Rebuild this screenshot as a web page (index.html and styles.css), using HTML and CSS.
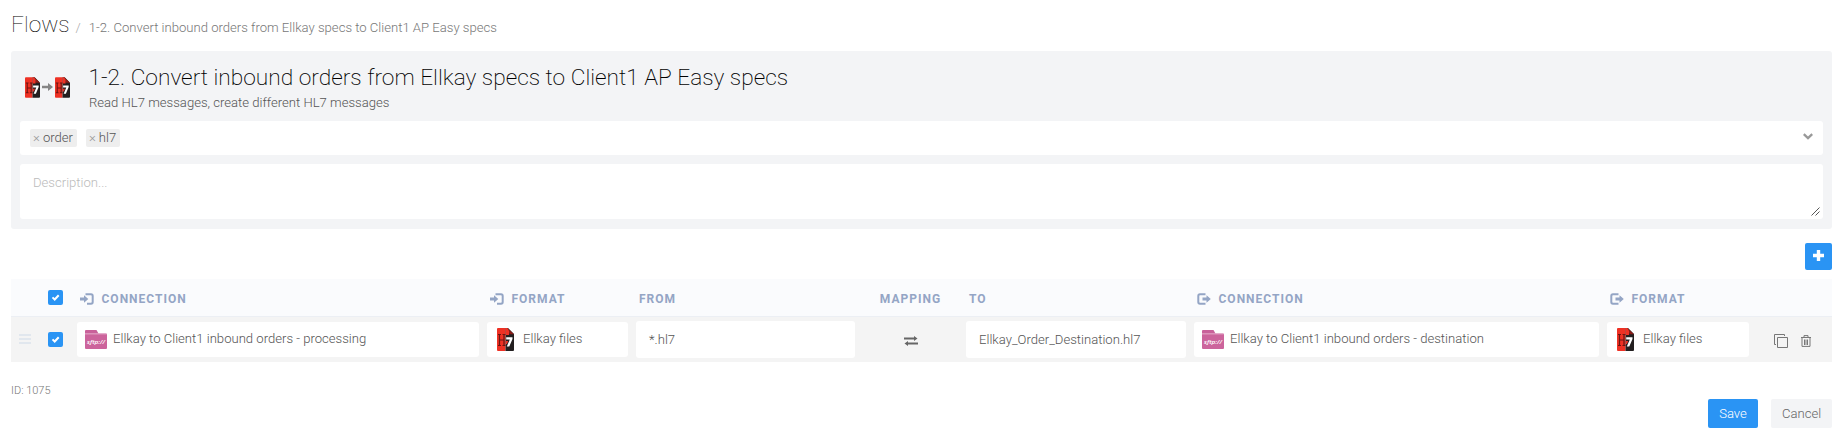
FILE: index.html
```html
<!DOCTYPE html>
<html lang="en">
<head>
<meta charset="utf-8">
<title>Flows</title>
<link rel="stylesheet" href="styles.css">
</head>
<body>
<svg class="defs" width="0" height="0" aria-hidden="true">
  <symbol id="hl7" viewBox="0 0 17 23">
    <path d="M1 0H8.500V23H1Q0 23 0 22V1Q0 0 1 0Z" fill="#ee3124"/>
    <path d="M8.500 0H11L17 6V22Q17 23 16 23H8.500Z" fill="#231f20"/>
    <path d="M10.500 0L17 6.200H12.500Z" fill="#8c1d18"/>
    <path d="M8.500 0H10.500L12 3V7H8.500Z" fill="#ee3124"/>
    <path d="M1 6.500H4M1 17.500H4M2.500 6.500V17.500M2.500 12H7M5.500 6.500H8.500M5.500 17.500H8.500M7 6.500V17.500" fill="none" stroke="#6b1411" stroke-width="1.200"/>
    <path d="M9.200 11.500V9.300H15.500V11L12.300 18.500H9.800L12.800 11.500Z" fill="#fff"/>
    <path d="M8.700 13H11.200L10 16H8.700Z" fill="#ee3124"/>
  </symbol>
  <symbol id="sftp" viewBox="0 0 22 19">
    <path d="M1 0H11.500L13.500 3.500H0V1Q0 0 1 0Z" fill="#c9619a"/>
    <path d="M0 3.500H21Q22 3.500 22 4.500V18Q22 19 21 19H1Q0 19 0 18Z" fill="#cc649c"/>
    <path d="M0 4H21.500" stroke="#e3a5c6" stroke-width=".8"/>
    <text x="2" y="13.800" font-family="Open Sans, sans-serif" font-weight="600" font-style="italic" font-size="6" textLength="18" lengthAdjust="spacingAndGlyphs" fill="#fff">sftp://</text>
  </symbol>
  <symbol id="in" viewBox="0 0 14 12">
    <path d="M5.500 1.200H11Q12.700 1.200 12.700 2.900V9.100Q12.700 10.800 11 10.800H7" fill="none" stroke="currentColor" stroke-width="2"/>
    <path d="M0 4.600H4V2.300L8.300 6L4 9.700V7.400H0Z" fill="currentColor"/>
  </symbol>
  <symbol id="out" viewBox="0 0 14 12">
    <path d="M8.500 1.200H3Q1.300 1.200 1.300 2.900V9.100Q1.300 10.800 3 10.800H8.500" fill="none" stroke="currentColor" stroke-width="2"/>
    <path d="M5.500 4.600H9.500V2.300L13.800 6L9.500 9.700V7.400H5.500Z" fill="currentColor"/>
  </symbol>
  <symbol id="check" viewBox="0 0 15 15">
    <path d="M4.500 7.400L6.700 9.500L10.700 5.200" fill="none" stroke="#fff" stroke-width="2"/>
  </symbol>
</svg>

<header class="crumbs">
  <h1 class="crumbs-title">Flows</h1>
  <span class="crumbs-sep">/</span>
  <span class="crumbs-item">1-2. Convert inbound orders from Ellkay specs to Client1 AP Easy specs</span>
</header>

<section class="panel">
  <div class="panel-head">
    <div class="flow-icon">
      <svg width="15" height="21"><use href="#hl7"/></svg>
      <svg width="11" height="8" viewBox="0 0 11 8"><path d="M0 2.700H6V0L11 4L6 8V5.300H0Z" fill="#858585"/></svg>
      <svg width="15" height="21"><use href="#hl7"/></svg>
    </div>
    <div>
      <h2 class="panel-title">1-2. Convert inbound orders from Ellkay specs to Client1 AP Easy specs</h2>
      <p class="panel-sub">Read HL7 messages, create different HL7 messages</p>
    </div>
  </div>
  <div class="tags">
    <span class="tag"><span class="tag-x">×</span>order</span>
    <span class="tag"><span class="tag-x">×</span>hl7</span>
    <svg class="chevron" width="10" height="7" viewBox="0 0 10 7"><path d="M.8 1.200L5 5.200L9.200 1.200" fill="none" stroke="#999" stroke-width="2.300"/></svg>
  </div>
  <div class="description">Description...
    <svg class="grip" width="9" height="9" viewBox="0 0 9 9"><path d="M.5 8.500L8.500 .5M4.500 8.500L8.500 4.500" stroke="#555" stroke-width="1"/></svg>
  </div>
</section>

<div class="toolbar">
  <button class="btn-add" aria-label="Add"><svg width="11" height="11" viewBox="0 0 11 11"><path d="M5.500 0V11M0 5.500H11" stroke="#fff" stroke-width="3.400"/></svg></button>
</div>

<div class="row head">
  <span></span>
  <span class="box"><svg width="15" height="15"><use href="#check"/></svg></span>
  <span class="th"><svg width="14" height="12"><use href="#in"/></svg>Connection</span>
  <span class="th"><svg width="14" height="12"><use href="#in"/></svg>Format</span>
  <span class="th">From</span>
  <span class="th th-mid">Mapping</span>
  <span class="th">To</span>
  <span class="th"><svg width="14" height="12"><use href="#out"/></svg>Connection</span>
  <span class="th"><svg width="14" height="12"><use href="#out"/></svg>Format</span>
  <span></span>
</div>
<div class="row item">
  <svg class="drag" width="12" height="10" viewBox="0 0 12 10"><path d="M0 1H12M0 5H12M0 9H12" stroke="#e1e7ee" stroke-width="2"/></svg>
  <span class="box"><svg width="15" height="15"><use href="#check"/></svg></span>
  <div class="cell"><svg width="22" height="19"><use href="#sftp"/></svg>Ellkay to Client1 inbound orders - processing</div>
  <div class="cell cell-format"><svg width="17" height="23"><use href="#hl7"/></svg>Ellkay files</div>
  <div class="cell cell-input">*.hl7</div>
  <svg class="swap" width="14" height="10" viewBox="0 0 14 10"><path d="M0 2.500H11M3 7.500H14" stroke="#666" stroke-width="1.800"/><path d="M10 0L13.500 2.500L10 5ZM4 5L.5 7.500L4 10Z" fill="#666"/></svg>
  <div class="cell cell-input">Ellkay_Order_Destination.hl7</div>
  <div class="cell"><svg width="22" height="19"><use href="#sftp"/></svg>Ellkay to Client1 inbound orders - destination</div>
  <div class="cell cell-format"><svg width="17" height="23"><use href="#hl7"/></svg>Ellkay files</div>
  <div class="actions">
    <svg width="14" height="14" viewBox="0 0 14 14"><path d="M3.500 3.500H13.500V13.500H3.500ZM2 10.500H.5V.5H10.500V2" fill="none" stroke="#777"/></svg>
    <svg width="10" height="12" viewBox="0 0 10 12"><path d="M0 2.500H10M3 2V.6H7V2M1 3V11.400H9V3M3.500 4.500V10M5 4.500V10M6.500 4.500V10" fill="none" stroke="#777"/></svg>
  </div>
</div>

<footer class="footer">
  <div class="flow-id">ID: 1075</div>
  <div class="buttons">
    <button class="btn btn-save">Save</button>
    <button class="btn">Cancel</button>
  </div>
</footer>
</body>
</html>
```
FILE: styles.css
```css
* { box-sizing: border-box; }
body {
  margin: 0;
  padding: 0 7px 0 11px;
  background: #fff;
  color: #555;
  font: 300 13.1px/20px Roboto, sans-serif;
}
svg { display: block; flex: none; }
h1, h2, p { margin: 0; font-weight: 300; }
button { border: 0; padding: 0; font: inherit; }
.defs { position: absolute; }

.crumbs {
  display: flex;
  align-items: baseline;
  height: 51px;
  padding-top: 9px;
  color: #777;
}
.crumbs-title { font-size: 22.700px; line-height: 32px; font-weight: 250; color: #000; }
.crumbs-sep { margin: 0 8px 0 6px; color: #aaa; }

.panel {
  height: 178px;
  padding: 13px 9px 10px;
  border-radius: 3px;
  background: #f3f4f6;
}
.panel-head { display: flex; height: 57px; }
.flow-icon {
  display: flex;
  align-items: center;
  gap: 2px;
  width: 64px;
  height: 46px;
  padding-left: 5px;
}
.panel-title { margin-left: 4.500px; font-size: 22.700px; line-height: 27px; font-weight: 200; color: #000; }
.panel-sub { margin: 2px 0 0 5px; line-height: 20px; color: #555; }
.tags {
  display: flex;
  align-items: center;
  gap: 9px;
  height: 34px;
  padding: 0 10px;
  border-radius: 3px;
  background: #fff;
}
.tag {
  height: 18px;
  padding: 0 4px 0 3px;
  border-radius: 2px;
  background: #eee;
  line-height: 18px;
}
.tag-x { margin-right: 3px; color: #999; }
.chevron { margin: -3px 0 0 auto; }
.description {
  position: relative;
  height: 55px;
  margin-top: 9px;
  padding: 9px 13px;
  border-radius: 3px;
  background: #fff;
  color: #bbb;
}
.grip { position: absolute; right: 3px; bottom: 3px; }

.toolbar { display: flex; justify-content: flex-end; height: 50px; padding-top: 14px; }
.btn-add {
  display: flex;
  justify-content: center;
  width: 27px;
  height: 27px;
  padding-top: 7px;
  border-radius: 2px;
  background: #2a94f4;
}

.row {
  display: grid;
  grid-template-columns: 33px 33px 410px 149px 227px 103px 228px 413px 150px 75px;
  align-items: center;
}
.head { height: 38px; border-bottom: 1px solid #eceff4; background: #fafbfd; }
.item { height: 45px; background: #f4f4f4; }
.th {
  display: flex;
  align-items: center;
  gap: 7.500px;
  padding: 2px 0 0 3px;
  font-size: 12px;
  font-weight: 700;
  letter-spacing: 1px;
  text-transform: uppercase;
  color: #94a5c5;
}
.th-mid { justify-content: center; padding: 2px 8px 0 0; }
.box {
  width: 15px;
  height: 15px;
  margin-left: 4px;
  border-radius: 2px;
  background: #2a94f4;
}
.drag { margin: -1px 0 0 8px; }
.cell {
  display: flex;
  align-items: center;
  gap: 6px;
  height: 35px;
  margin-right: 8px;
  padding: 0 8px 1px;
  border-radius: 3px;
  background: #fff;
}
.cell-format { gap: 9px; padding-left: 10px; }
.cell-input { height: 37px; padding: 1px 13px 0; }
.swap { justify-self: center; margin: 2px 8px 0 0; }
.actions { display: flex; align-items: center; gap: 13px; margin-top: 2px; padding-left: 17px; }

.footer { padding-top: 19px; }
.flow-id { height: 18px; font-size: 11px; color: #777; }
.buttons { display: flex; justify-content: flex-end; gap: 13px; }
.btn {
  width: 61px;
  height: 29px;
  border-radius: 2px;
  background: #f3f4f6;
  color: #666;
}
.btn-save { width: 50px; background: #2a94f4; color: #fff; }
```
